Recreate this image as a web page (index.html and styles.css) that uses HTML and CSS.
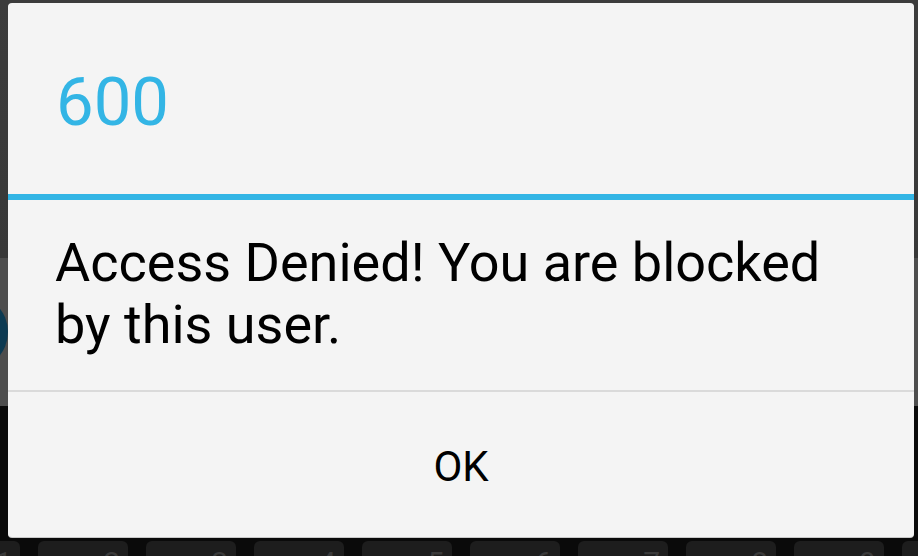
FILE: index.html
```html
<!DOCTYPE html>
<html lang="en">
<head>
  <meta charset="UTF-8">
  <meta name="viewport" content="width=device-width, initial-scale=1.0" />
  <title>600</title>
  <link rel="stylesheet" href="styles.css">
</head>
<body>
  <div class="screen">
    <div class="app-top"></div>
    <div class="list-row">
      <span class="avatar"></span>
      <span class="row-text">S</span>
    </div>
    <div class="keyboard">
      <div class="keys">
        <span class="key">1</span>
        <span class="key">2</span>
        <span class="key">3</span>
        <span class="key">4</span>
        <span class="key">5</span>
        <span class="key">6</span>
        <span class="key">7</span>
        <span class="key">8</span>
        <span class="key">9</span>
        <span class="key">0</span>
      </div>
    </div>

    <div class="dialog">
      <h1 class="dialog-title">600</h1>
      <div class="dialog-divider"></div>
      <p class="dialog-message">Access Denied! You are blocked by this user.</p>
      <div class="dialog-buttons">
        <button class="dialog-btn">OK</button>
      </div>
    </div>
  </div>
</body>
</html>
```

FILE: styles.css
```css
html, body {
  margin: 0;
  padding: 0;
}

body {
  width: 918px;
  height: 556px;
  overflow: hidden;
  background: #0a0a0a;
  font-family: 'Roboto', 'Liberation Sans', sans-serif;
}

.screen {
  position: relative;
  width: 918px;
  height: 556px;
  display: flex;
  flex-direction: column;
  overflow: hidden;
}

.app-top {
  flex: 0 0 258px;
  background: linear-gradient(#3c3c3c, #383838);
}

.list-row {
  flex: 0 0 148px;
  background: #4d4d4d;
  display: flex;
  align-items: center;
  justify-content: space-between;
}

.avatar {
  width: 76px;
  height: 76px;
  margin-left: -68px;
  border-radius: 50%;
  background: #0c3a52;
}

.row-text {
  margin-right: -24px;
  font-size: 40px;
  font-weight: bold;
  color: #0c3a52;
  padding-top: 30px;
}

.keyboard {
  flex: 1 1 auto;
  min-height: 0;
  overflow: hidden;
  background: #0a0a0a;
  padding-top: 135px;
}

.keys {
  display: flex;
  gap: 18px;
  margin-left: -70px;
}

.key {
  flex: 0 0 90px;
  height: 60px;
  border-radius: 6px;
  background: #1d1d1d;
  color: #3a3a3a;
  font-size: 30px;
  text-align: right;
  padding: 4px 8px 0 0;
  box-sizing: border-box;
}

/* dialog sits over the app */
.dialog {
  position: absolute;
  left: 8px;
  top: 3px;
  width: 906px;
  height: 534px;
  background: #f4f4f4;
  border-radius: 4px;
  box-shadow: 0 1px 0 #c8c8c8;
  display: flex;
  flex-direction: column;
}

.dialog-title {
  margin: 0;
  height: 191px;
  box-sizing: border-box;
  padding: 59px 0 0 48px;
  font-size: 67px;
  font-weight: normal;
  line-height: 80px;
  color: #33b5e5;
}

.dialog-divider {
  height: 6px;
  background: #33b5e5;
}

.dialog-message {
  margin: 0;
  height: 192px;
  box-sizing: border-box;
  padding: 32px 40px 0 47px;
  font-size: 54px;
  line-height: 62px;
  color: #000;
  border-bottom: 2px solid #dadada;
}

.dialog-buttons {
  flex: 1;
  display: flex;
}

.dialog-btn {
  flex: 1;
  border: none;
  background: transparent;
  font-family: 'Roboto', 'Liberation Sans', sans-serif;
  font-size: 42px;
  line-height: 50px;
  color: #000;
  padding: 4px 0 0;
}
```
